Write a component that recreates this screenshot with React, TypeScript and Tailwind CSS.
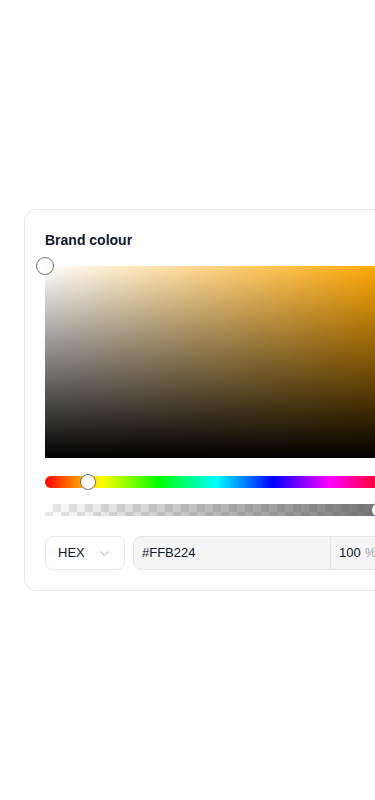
import { ChevronDown } from "lucide-react";

const font = { fontFamily: '"Liberation Sans", Arial, sans-serif' };

export default function App() {
  return (
    <div
      className="min-h-screen w-full overflow-hidden bg-white flex items-center"
      style={font}
    >
      {/* Card */}
      <div className="ml-6 w-96 shrink-0 rounded-xl border border-gray-200 bg-white p-5">
        <h2 className="text-sm font-bold leading-5 text-gray-900">Brand colour</h2>

        {/* Saturation / value area */}
        <div className="relative mt-4 h-48 w-full bg-[linear-gradient(to_top,#000,transparent),linear-gradient(to_right,#fff,#ffa600)]">
          <div className="absolute -left-[9px] -top-[9px] h-[18px] w-[18px] rounded-full border border-gray-500 bg-white/60" />
        </div>

        {/* Hue slider */}
        <div className="relative mt-4 flex h-4 items-center">
          <div className="h-3 w-full rounded-full bg-[linear-gradient(to_right,#f00,#ff0,#0f0,#0ff,#00f,#f0f,#f00)]" />
          <div className="absolute left-[35px] top-0 h-4 w-4 rounded-full border border-gray-500 bg-white" />
        </div>

        {/* Alpha slider */}
        <div className="relative mt-3 flex h-4 items-center">
          <div className="h-3 w-full bg-[linear-gradient(45deg,#ddd_25%,transparent_25%,transparent_75%,#ddd_75%),linear-gradient(45deg,#ddd_25%,transparent_25%,transparent_75%,#ddd_75%)] bg-[length:16px_16px] bg-[position:0_0,8px_8px] bg-white">
            <div className="h-full w-full bg-[linear-gradient(to_right,rgba(255,255,255,0.3),rgba(90,90,90,0.85))]" />
          </div>
          <div className="absolute right-0 top-0 h-4 w-4 rounded-full border border-gray-500 bg-white" />
        </div>

        {/* Inputs */}
        <div className="mt-[18px] flex gap-2">
          <button className="flex h-[34px] w-20 items-center justify-between rounded-lg border border-gray-200 bg-white pl-3 pr-3 text-[13px] text-gray-900">
            HEX
            <ChevronDown size={15} className="text-gray-400" strokeWidth={1.5} />
          </button>
          <div className="flex h-[34px] flex-1 items-center rounded-lg border border-gray-200 bg-[#f5f5f5] text-[13px] text-gray-900">
            <span className="flex-1 pl-2">#FFB224</span>
            <div className="flex h-full w-14 items-center gap-1 border-l border-gray-200 pl-2">
              <span>100</span>
              <span className="text-gray-400">%</span>
            </div>
          </div>
        </div>
      </div>
    </div>
  );
}
